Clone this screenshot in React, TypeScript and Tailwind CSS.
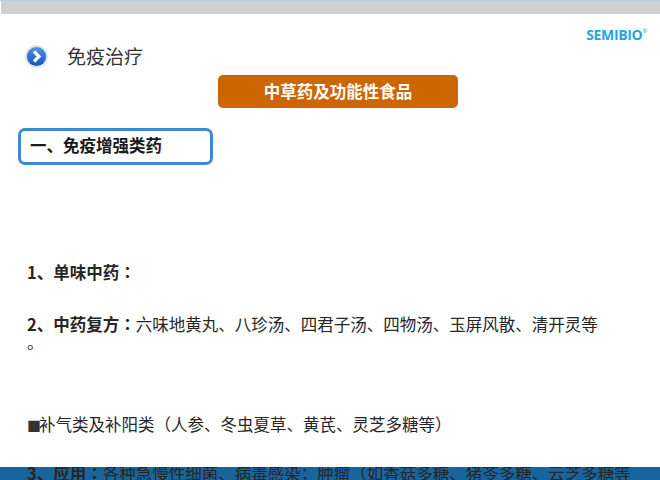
function Colon() {
  return <span className="font-['Noto_Sans_CJK_TC',sans-serif]">：</span>;
}

export default function App() {
  const font = { fontFamily: '"Noto Sans CJK SC", "Liberation Sans", sans-serif' };
  return (
    <div className="w-[660px] h-[480px] bg-white overflow-hidden flex flex-col text-[#262626]" style={font}>
      <div className="h-[1px] bg-[#b4cfe2] shrink-0" />
      <div className="h-[13px] bg-[#d0d0d0] shrink-0 ml-[1px]" />
      <div className="h-[17px] shrink-0 flex justify-end pr-[13px] pt-[13px]">
        <div className="flex items-start text-[#22a7e0] font-bold text-[14px] leading-[15px] tracking-[-0.35px]" style={{ fontFamily: '"Open Sans", sans-serif' }}>
          SEMIBIO<span className="text-[6px] leading-[8px] font-normal">®</span>
        </div>
      </div>
      <div className="h-[26px] shrink-0 flex items-center pl-[25px] gap-[19px] mt-[12px]">
        <svg width="23" height="23" viewBox="0 0 23 23">
          <defs>
            <linearGradient id="g" x1="0" y1="0" x2="0" y2="1">
              <stop offset="0" stopColor="#4f93e8" />
              <stop offset="1" stopColor="#1254c4" />
            </linearGradient>
          </defs>
          <circle cx="11.5" cy="11.5" r="11.4" fill="#e0e2e6" />
          <circle cx="11.5" cy="11.5" r="9.6" fill="url(#g)" />
          <path d="M9 6.5 L14 11.5 L9 16.5" fill="none" stroke="#fff" strokeWidth="3.2" />
        </svg>
        <span className="text-[19px] leading-[26px] text-[#333]">免疫治疗</span>
      </div>
      <div className="shrink-0 flex justify-center mt-[6px] pl-[16px]">
        <div className="w-[240px] h-[33px] rounded-[5px] bg-[#cc6600] text-white font-bold text-[16.5px] leading-[32px] text-center">
          中草药及功能性食品
        </div>
      </div>
      <div className="shrink-0 ml-[18px] mt-[20px] w-[195px] h-[37px] rounded-[7px] border-[3.5px] border-[#3e88d8] bg-white font-bold text-[16.5px] leading-[29px] pl-[9px] text-[#1a1a1a]">
        一、免疫增强类药
      </div>
      <div className="shrink-0 ml-[27px] mt-[95px] w-[590px] text-[16.5px] leading-[24px]">
        <div className="font-bold">1、单味中药<Colon /></div>
        <div className="mt-[28px] h-[48px]">
          <div><span className="font-bold">2、中药复方<Colon /></span>六味地黄丸、八珍汤、四君子汤、四物汤、玉屏风散、清开灵等</div>
          <div className="leading-[12px]">。</div>
        </div>
        <div className="mt-[52px]"><span className="text-[#333] text-[14px] tracking-[-2px]">■</span>补气类及补阳类（人参、冬虫夏草、黄芪、灵芝多糖等）</div>
      </div>
      <div className="mt-[30px] flex-1 bg-[#17659c] pl-[27px] whitespace-nowrap overflow-hidden text-[16.5px] leading-[12px] text-[#262626]">
        <span className="font-bold">3、应用<Colon /></span>各种急慢性细菌、病毒感染；肿瘤（如香菇多糖、猪苓多糖、云芝多糖等
      </div>
    </div>
  );
}
